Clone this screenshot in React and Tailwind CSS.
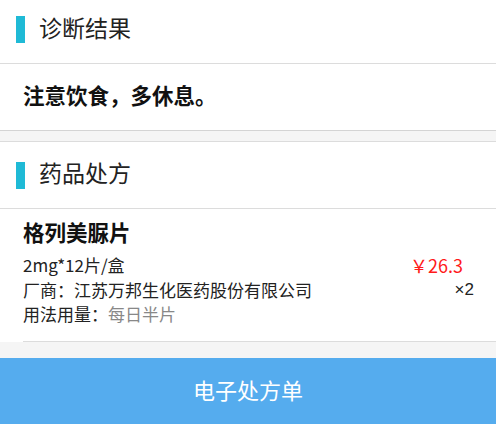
import React from 'react';

const drug = {
  name: '格列美脲片',
  spec: '2mg*12片/盒',
  price: '￥26.3',
  count: '×2',
  maker: '江苏万邦生化医药股份有限公司',
  usage: '每日半片'
};

function SectionTitle({ title, className }) {
  return (
    <div className={'flex items-center border-b border-[#dcdcdc] ' + className}>
      <div className="w-[9px] h-[27px] bg-[#1fbad6] ml-4"></div>
      <div className="ml-[14px] mb-[5px] text-[23px] text-[#222]">{title}</div>
    </div>
  );
}

export default function App() {
  return (
    <div
      className="w-[496px] h-[424px] flex flex-col bg-[#f5f5f5] overflow-hidden"
      style={{ fontFamily: '"Noto Sans CJK SC", "Noto Sans", sans-serif' }}
    >
      <div className="bg-white border-b border-[#d4d4d4]">
        <SectionTitle title="诊断结果" className="h-[64px] pb-[4px]" />
        <div className="h-[66px] flex items-center pb-[4px] px-[23px] text-[21.5px] font-bold text-[#111]">
          注意饮食，多休息。
        </div>
      </div>

      <div className="mt-[10px] bg-white border-t border-[#dcdcdc]">
        <SectionTitle title="药品处方" className="h-[67px]" />
        <div className="pl-[23px]">
          <div className="pr-[22px] pt-[8px] pb-[14.5px] border-b border-[#dcdcdc]">
            <div className="text-[21.5px] font-bold text-[#111] leading-[30px]">{drug.name}</div>
            <div className="mt-[6px] flex justify-between text-[17px] text-[#222] leading-[24.5px]">
              <span>{drug.spec}</span>
              <span className="text-[18px] text-[#ff1a1a] mr-[11px]">{drug.price}</span>
            </div>
            <div className="flex justify-between text-[17px] text-[#222] leading-[24.5px]">
              <span>厂商：{drug.maker}</span>
              <span style={{ fontFamily: '"Liberation Sans", sans-serif' }}>{drug.count}</span>
            </div>
            <div className="text-[17px] text-[#222] leading-[24.5px]">
              用法用量：<span className="text-[#888]">{drug.usage}</span>
            </div>
          </div>
        </div>
      </div>

      <div className="mt-auto h-[66px] pb-[4px] bg-[#55acee] flex items-center justify-center text-white text-[22px]">
        电子处方单
      </div>
    </div>
  );
}
